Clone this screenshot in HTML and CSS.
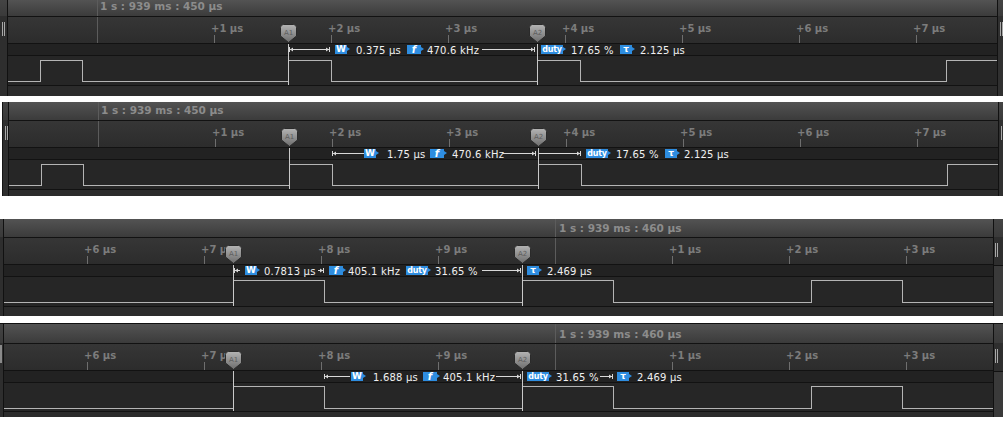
FILE: index.html
```html
<!DOCTYPE html>
<html>
<head>
<meta charset="utf-8">
<link rel="stylesheet" href="styles.css">
</head>
<body>
<svg class="defs" width="0" height="0" aria-hidden="true">
  <defs>
    <linearGradient id="mkg" x1="0" y1="0" x2="0" y2="1">
      <stop offset="0" stop-color="#b4b4b4"/>
      <stop offset="1" stop-color="#6c6c6c"/>
    </linearGradient>
  </defs>
</svg>

<!-- Panel 1 -->
<div class="panel p1">
  <div class="gl"><span class="handle"></span></div>
  <div class="main">
    <div class="row head"><span class="origin" style="left:89px"></span><span class="stamp" style="left:92px">1 s : 939 ms : 450 µs</span></div>
    <div class="row ruler">
      <span class="origin" style="left:89px"></span>
      <span class="tick" style="left:-28px"></span><span class="lbl" style="left:-31px">-1 µs</span>
      <span class="tick" style="left:206px"></span><span class="lbl" style="left:203px">+1 µs</span>
      <span class="tick" style="left:323px"></span><span class="lbl" style="left:320px">+2 µs</span>
      <span class="tick" style="left:440px"></span><span class="lbl" style="left:437px">+3 µs</span>
      <span class="tick" style="left:557px"></span><span class="lbl" style="left:554px">+4 µs</span>
      <span class="tick" style="left:674px"></span><span class="lbl" style="left:671px">+5 µs</span>
      <span class="tick" style="left:791px"></span><span class="lbl" style="left:788px">+6 µs</span>
      <span class="tick" style="left:908px"></span><span class="lbl" style="left:905px">+7 µs</span>
      <svg class="mk" style="left:280px" width="17" height="19" viewBox="0 0 17 19"><path d="M3.5 0.5H13.5Q16.5 0.5 16.5 3.5V12L8.5 18.5L0.5 12V3.5Q0.5 0.5 3.5 0.5Z"/><text x="8.5" y="10.5">A1</text></svg>
      <svg class="mk" style="left:529px" width="17" height="19" viewBox="0 0 17 19"><path d="M3.5 0.5H13.5Q16.5 0.5 16.5 3.5V12L8.5 18.5L0.5 12V3.5Q0.5 0.5 3.5 0.5Z"/><text x="8.5" y="10.5">A2</text></svg>
    </div>
    <div class="row meas">
      <svg class="arr" width="989" height="11">
        <path d="M281 5.5H322M281.5 3V8M321.5 3V8M474 5.5H527M526.5 3V8"/>
        <polygon points="282,5.5 285,3.5 285,7.5"/><polygon points="321,5.5 318,3.5 318,7.5"/><polygon points="526,5.5 523,3.5 523,7.5"/>
      </svg>
      <span class="bdg w" style="left:327px">W</span><span class="val" style="left:348px">0.375 µs</span>
      <span class="bdg f" style="left:399px">f</span><span class="val" style="left:419px">470.6 kHz</span>
      <span class="bdg duty" style="left:533px">duty</span><span class="val" style="left:563px">17.65 %</span>
      <span class="bdg tau" style="left:612px">τ</span><span class="val" style="left:632px">2.125 µs</span>
    </div>
    <div class="row wave">
      <svg class="sig" width="989" height="29"><path d="M0 25.5H32.5V4.5H74.5V25.5H280.5V4.5H323.5V25.5H529.5V4.5H572.5V25.5H938.5V4.5H989"/></svg>
    </div>
    <div class="row foot"></div>
    <span class="cur" style="left:280px"></span>
    <span class="cur" style="left:529px"></span>
  </div>
  <div class="gr"><span class="handle"></span></div>
</div>

<!-- Panel 2 -->
<div class="panel p2">
  <div class="gl"><span class="handle"></span></div>
  <div class="main">
    <div class="row head"><span class="origin" style="left:89px"></span><span class="stamp" style="left:92px">1 s : 939 ms : 450 µs</span></div>
    <div class="row ruler">
      <span class="origin" style="left:89px"></span>
      <span class="tick" style="left:-28px"></span><span class="lbl" style="left:-31px">-1 µs</span>
      <span class="tick" style="left:206px"></span><span class="lbl" style="left:203px">+1 µs</span>
      <span class="tick" style="left:323px"></span><span class="lbl" style="left:320px">+2 µs</span>
      <span class="tick" style="left:440px"></span><span class="lbl" style="left:437px">+3 µs</span>
      <span class="tick" style="left:557px"></span><span class="lbl" style="left:554px">+4 µs</span>
      <span class="tick" style="left:674px"></span><span class="lbl" style="left:671px">+5 µs</span>
      <span class="tick" style="left:791px"></span><span class="lbl" style="left:788px">+6 µs</span>
      <span class="tick" style="left:908px"></span><span class="lbl" style="left:905px">+7 µs</span>
      <svg class="mk" style="left:280px" width="17" height="19" viewBox="0 0 17 19"><path d="M3.5 0.5H13.5Q16.5 0.5 16.5 3.5V12L8.5 18.5L0.5 12V3.5Q0.5 0.5 3.5 0.5Z"/><text x="8.5" y="10.5">A1</text></svg>
      <svg class="mk" style="left:529px" width="17" height="19" viewBox="0 0 17 19"><path d="M3.5 0.5H13.5Q16.5 0.5 16.5 3.5V12L8.5 18.5L0.5 12V3.5Q0.5 0.5 3.5 0.5Z"/><text x="8.5" y="10.5">A2</text></svg>
    </div>
    <div class="row meas">
      <svg class="arr" width="989" height="11">
        <path d="M323 5.5H355M323.5 3V8M494 5.5H527M526.5 3V8M529 5.5H572M529.5 3V8M571.5 3V8"/>
        <polygon points="324,5.5 327,3.5 327,7.5"/><polygon points="526,5.5 523,3.5 523,7.5"/><polygon points="571,5.5 568,3.5 568,7.5"/>
      </svg>
      <span class="bdg w" style="left:355px">W</span><span class="val" style="left:378px">1.75 µs</span>
      <span class="bdg f" style="left:421px">f</span><span class="val" style="left:443px">470.6 kHz</span>
      <span class="bdg duty" style="left:577px">duty</span><span class="val" style="left:607px">17.65 %</span>
      <span class="bdg tau" style="left:656px">τ</span><span class="val" style="left:675px">2.125 µs</span>
    </div>
    <div class="row wave">
      <svg class="sig" width="989" height="29"><path d="M0 25.5H32.5V4.5H74.5V25.5H280.5V4.5H323.5V25.5H529.5V4.5H572.5V25.5H938.5V4.5H989"/></svg>
    </div>
    <div class="row foot"></div>
    <span class="cur" style="left:280px"></span>
    <span class="cur" style="left:529px"></span>
  </div>
  <div class="gr"><span class="handle"></span></div>
</div>

<!-- Panel 3 -->
<div class="panel p3">
  <div class="gl"></div>
  <div class="main">
    <div class="row head"><span class="origin" style="left:551px"></span><span class="stamp" style="left:555px">1 s : 939 ms : 460 µs</span></div>
    <div class="row ruler">
      <span class="origin" style="left:551px"></span>
      <span class="tick" style="left:83px"></span><span class="lbl" style="left:80px">+6 µs</span>
      <span class="tick" style="left:200px"></span><span class="lbl" style="left:197px">+7 µs</span>
      <span class="tick" style="left:317px"></span><span class="lbl" style="left:314px">+8 µs</span>
      <span class="tick" style="left:434px"></span><span class="lbl" style="left:431px">+9 µs</span>
      <span class="tick" style="left:668px"></span><span class="lbl" style="left:665px">+1 µs</span>
      <span class="tick" style="left:785px"></span><span class="lbl" style="left:782px">+2 µs</span>
      <span class="tick" style="left:902px"></span><span class="lbl" style="left:899px">+3 µs</span>
      <svg class="mk" style="left:229px" width="17" height="19" viewBox="0 0 17 19"><path d="M3.5 0.5H13.5Q16.5 0.5 16.5 3.5V12L8.5 18.5L0.5 12V3.5Q0.5 0.5 3.5 0.5Z"/><text x="8.5" y="10.5">A1</text></svg>
      <svg class="mk" style="left:518px" width="17" height="19" viewBox="0 0 17 19"><path d="M3.5 0.5H13.5Q16.5 0.5 16.5 3.5V12L8.5 18.5L0.5 12V3.5Q0.5 0.5 3.5 0.5Z"/><text x="8.5" y="10.5">A2</text></svg>
    </div>
    <div class="row meas">
      <svg class="arr" width="989" height="11">
        <path d="M230 5.5H236M230.5 3V8M314 5.5H320M319.5 3V8M478 5.5H517M516.5 3V8"/>
        <polygon points="231,5.5 234,3.5 234,7.5"/><polygon points="319,5.5 316,3.5 316,7.5"/><polygon points="516,5.5 513,3.5 513,7.5"/>
      </svg>
      <span class="bdg w" style="left:241px">W</span><span class="val" style="left:260px">0.7813 µs</span>
      <span class="bdg f" style="left:325px">f</span><span class="val" style="left:344px">405.1 kHz</span>
      <span class="bdg duty" style="left:402px">duty</span><span class="val" style="left:431px">31.65 %</span>
      <span class="bdg tau" style="left:523px">τ</span><span class="val" style="left:543px">2.469 µs</span>
    </div>
    <div class="row wave">
      <svg class="sig" width="989" height="29"><path d="M0 25.5H229.5V3.5H320.5V25.5H518.5V3.5H609.5V25.5H807.5V3.5H898.5V25.5H989"/></svg>
    </div>
    <div class="row foot"></div>
    <span class="cur" style="left:229px"></span>
    <span class="cur" style="left:518px"></span>
  </div>
  <div class="gr"><span class="handle"></span></div>
</div>

<!-- Panel 4 -->
<div class="panel p4">
  <div class="gl"><span class="bar"></span></div>
  <div class="main">
    <div class="row head"><span class="origin" style="left:551px"></span><span class="stamp" style="left:555px">1 s : 939 ms : 460 µs</span></div>
    <div class="row ruler">
      <span class="origin" style="left:551px"></span>
      <span class="tick" style="left:83px"></span><span class="lbl" style="left:80px">+6 µs</span>
      <span class="tick" style="left:200px"></span><span class="lbl" style="left:197px">+7 µs</span>
      <span class="tick" style="left:317px"></span><span class="lbl" style="left:314px">+8 µs</span>
      <span class="tick" style="left:434px"></span><span class="lbl" style="left:431px">+9 µs</span>
      <span class="tick" style="left:668px"></span><span class="lbl" style="left:665px">+1 µs</span>
      <span class="tick" style="left:785px"></span><span class="lbl" style="left:782px">+2 µs</span>
      <span class="tick" style="left:902px"></span><span class="lbl" style="left:899px">+3 µs</span>
      <svg class="mk" style="left:229px" width="17" height="19" viewBox="0 0 17 19"><path d="M3.5 0.5H13.5Q16.5 0.5 16.5 3.5V12L8.5 18.5L0.5 12V3.5Q0.5 0.5 3.5 0.5Z"/><text x="8.5" y="10.5">A1</text></svg>
      <svg class="mk" style="left:518px" width="17" height="19" viewBox="0 0 17 19"><path d="M3.5 0.5H13.5Q16.5 0.5 16.5 3.5V12L8.5 18.5L0.5 12V3.5Q0.5 0.5 3.5 0.5Z"/><text x="8.5" y="10.5">A2</text></svg>
    </div>
    <div class="row meas">
      <svg class="arr" width="989" height="11">
        <path d="M320 5.5H346M320.5 3V8M492 5.5H517M516.5 3V8M596 5.5H609M608.5 3V8"/>
        <polygon points="321,5.5 324,3.5 324,7.5"/><polygon points="516,5.5 513,3.5 513,7.5"/><polygon points="608,5.5 605,3.5 605,7.5"/>
      </svg>
      <span class="bdg w" style="left:347px">W</span><span class="val" style="left:369px">1.688 µs</span>
      <span class="bdg f" style="left:419px">f</span><span class="val" style="left:439px">405.1 kHz</span>
      <span class="bdg duty" style="left:523px">duty</span><span class="val" style="left:552px">31.65 %</span>
      <span class="bdg tau" style="left:613px">τ</span><span class="val" style="left:633px">2.469 µs</span>
    </div>
    <div class="row wave">
      <svg class="sig" width="989" height="28"><path d="M0 25.5H229.5V3.5H320.5V25.5H518.5V3.5H609.5V25.5H807.5V3.5H898.5V25.5H989"/></svg>
    </div>
    <div class="row foot"></div>
    <span class="cur" style="left:229px"></span>
    <span class="cur" style="left:518px"></span>
  </div>
  <div class="gr"><span class="handle"></span></div>
</div>
</body>
</html>
```

FILE: styles.css
```css
html, body {
  margin: 0;
  padding: 0;
}
body {
  background: #ffffff;
  width: 1003px;
  height: 425px;
  overflow: hidden;
  font-family: "DejaVu Sans", Verdana, sans-serif;
}
.defs {
  position: absolute;
  width: 0;
  height: 0;
}

.panel {
  display: flex;
  background: #2b2b2b;
}
.p1 { --hh: 16px; --rh: 26px; --mh: 11px; --wh: 29px; --fh: 10px; }
.p2 { --hh: 18px; --rh: 26px; --mh: 11px; --wh: 29px; --fh: 6px; margin-top: 6px; margin-left: 2px; }
.p3 { --hh: 18px; --rh: 26px; --mh: 11px; --wh: 29px; --fh: 9px; margin-top: 23px; }
.p4 { --hh: 19px; --rh: 26px; --mh: 11px; --wh: 28px; --fh: 5px; margin-top: 7px; border-top: 1px solid #111; }

/* gutters */
.gl {
  position: relative;
  width: 7px;
  flex: none;
  border-right: 1px solid #111;
  background: linear-gradient(#444 0, #3a3a3a var(--hh), #2e2e2e var(--hh));
}
.p2 .gl { width: 5px; border-left: 1px solid #151515; }
.p3 .gl, .p4 .gl { width: 3px; }
.gr {
  position: relative;
  width: 5px;
  flex: none;
  border-left: 1px solid #111;
  background: linear-gradient(#444 0, #3a3a3a var(--hh), #303030 var(--hh));
}
.p3 .gr, .p4 .gr {
  width: 9px;
  background: linear-gradient(#454545 0, #3a3a3a var(--hh), #2e2e2e var(--hh), #2e2e2e calc(var(--hh) + var(--rh) + 2px), #111 calc(var(--hh) + var(--rh) + 2px), #111 calc(var(--hh) + var(--rh) + 3px), #3a3a3a calc(var(--hh) + var(--rh) + 3px));
}
.handle {
  position: absolute;
  left: 2px;
  top: calc(var(--hh) + 6px);
  width: 1px;
  height: 14px;
  border-left: 1px solid #a8a8a8;
  border-right: 1px solid #a8a8a8;
}
.gr .handle { left: 2px; }
.p3 .gr .handle, .p4 .gr .handle { left: 1px; }
.bar {
  position: absolute;
  left: 0;
  top: calc(var(--hh) + 2px);
  width: 2px;
  height: 18px;
  background: #8a8a8a;
}

/* main timeline */
.main {
  position: relative;
  width: 989px;
  flex: none;
  display: flex;
  flex-direction: column;
  overflow: hidden;
}
.row {
  position: relative;
  flex: none;
  border-bottom: 1px solid #121212;
}
.head {
  height: var(--hh);
  background: linear-gradient(#535353, #3b3b3b);
}
.ruler {
  height: var(--rh);
  background: linear-gradient(#363636, #2c2c2c);
}
.meas {
  height: var(--mh);
  background: #222222;
}
.wave {
  height: var(--wh);
  background: #262626;
}
.foot {
  height: var(--fh);
  background: #2b2b2b;
  border-bottom: 0;
}

.origin {
  position: absolute;
  top: 0;
  bottom: 0;
  width: 1px;
  background: #5c5c5c;
}
.stamp {
  position: absolute;
  bottom: 4px;
  font-weight: bold;
  font-size: 10.5px;
  line-height: 12px;
  color: #8c8c8c;
  white-space: nowrap;
}
.p3 .stamp, .p4 .stamp { bottom: 3px; }

.tick {
  position: absolute;
  bottom: 0;
  width: 1px;
  height: 8px;
  background: #6e6e6e;
}
.lbl {
  position: absolute;
  top: 6px;
  font-weight: bold;
  font-size: 10px;
  line-height: 12px;
  color: #7c7c7c;
  white-space: nowrap;
}

/* cursor markers */
.mk {
  position: absolute;
  bottom: 0;
  margin-left: -8px;
  overflow: visible;
}
.mk path {
  fill: url(#mkg);
  stroke: #2a2a2a;
  stroke-width: 1;
}
.mk text {
  font-family: "DejaVu Sans", sans-serif;
  font-size: 7px;
  fill: #5e5e5e;
  text-anchor: middle;
}
.cur {
  position: absolute;
  width: 1px;
  background: #c9c9c9;
  top: calc(var(--hh) + var(--rh) + 2px);
  height: calc(var(--mh) + var(--wh) + 1px);
}

/* measurements */
.arr {
  position: absolute;
  left: 0;
  top: 0;
}
.arr path {
  stroke: #d8d8d8;
  stroke-width: 1;
  fill: none;
  shape-rendering: crispEdges;
}
.arr polygon {
  fill: #d8d8d8;
}
.bdg {
  position: absolute;
  top: 1px;
  height: 9px;
  background: #2e8de0;
  color: #ffffff;
  font-weight: bold;
  font-size: 9px;
  line-height: 9px;
  text-align: center;
}
.bdg::after {
  content: "";
  position: absolute;
  right: -3px;
  top: 2px;
  border-left: 3px solid #2e8de0;
  border-top: 2.5px solid transparent;
  border-bottom: 2.5px solid transparent;
}
.bdg.w { width: 12px; }
.bdg.f { width: 14px; font-style: italic; font-size: 10px; }
.bdg.duty { width: 22px; font-size: 8px; letter-spacing: -0.2px; }
.bdg.tau { width: 12px; }
.val {
  position: absolute;
  top: 1px;
  font-size: 10px;
  line-height: 11px;
  letter-spacing: 0.2px;
  color: #f0f0f0;
  white-space: nowrap;
}

.sig {
  position: absolute;
  left: 0;
  top: 0;
}
.sig path {
  fill: none;
  stroke: #b4b4b4;
  stroke-width: 1;
  shape-rendering: crispEdges;
}
```
